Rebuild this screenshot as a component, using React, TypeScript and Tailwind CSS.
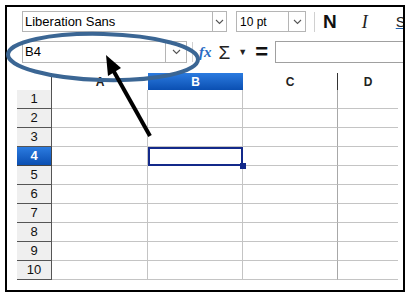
import React from "react";

const rows = [1, 2, 3, 4, 5, 6, 7, 8, 9, 10];

function Chevron() {
  return (
    <svg width="9" height="6" viewBox="0 0 9 6">
      <path d="M1 1 L4.5 4.5 L8 1" fill="none" stroke="#555" strokeWidth="1.1" />
    </svg>
  );
}

export default function App() {
  const font = { fontFamily: '"Liberation Sans", Arial, sans-serif' };
  return (
    <div className="relative w-[411px] h-[294px] bg-white pt-[5px] pl-[5px]" style={font}>
      <div className="w-[400px] h-[287px] border-2 border-black flex flex-col overflow-hidden bg-white">
        {/* toolbar row 1 */}
        <div className="mt-[4px] ml-[15px] h-[21px] flex items-center">
          <div className="shrink-0 w-[191px] h-[21px] border border-[#b5b5b5] bg-white flex items-center pl-[2px] text-[13px] text-black">
            Liberation Sans
          </div>
          <div className="shrink-0 w-[14px] h-[21px] border border-l-0 border-[#b5b5b5] flex items-center justify-center">
            <Chevron />
          </div>
          <div className="shrink-0 ml-[9px] w-[53px] h-[21px] border border-[#b5b5b5] flex items-center pl-[3px] text-[12px] text-black">
            10 pt
          </div>
          <div className="shrink-0 w-[17px] h-[21px] border border-l-0 border-[#b5b5b5] flex items-center justify-center">
            <Chevron />
          </div>
          <div className="shrink-0 ml-[8px] w-px h-[20px] bg-[#d0d0d0]" />
          <div className="shrink-0 ml-[8px] text-[19px] font-bold text-[#111] leading-none">N</div>
          <div className="shrink-0 ml-[25px] text-[18px] italic text-[#222] leading-none" style={{ fontFamily: '"Liberation Serif", serif' }}>I</div>
          <div className="shrink-0 ml-[28px] text-[15px] text-[#222] leading-none underline decoration-[#2060b0]">S</div>
        </div>
        {/* toolbar row 2 */}
        <div className="mt-[9px] ml-[15px] h-[22px] flex items-center">
          <div className="shrink-0 w-[143px] h-[22px] border border-[#b5b5b5] border-r-0 flex items-center pl-[2px] text-[13px] text-black">
            B4
          </div>
          <div className="shrink-0 w-[22px] h-[22px] border border-[#b5b5b5] flex items-center justify-center">
            <Chevron />
          </div>
          <div className="shrink-0 ml-[5px] w-px h-[20px] bg-[#d0d0d0]" />
          <div className="shrink-0 ml-[6px] text-[15px] italic font-bold text-[#2a6bc4] leading-none" style={{ fontFamily: '"Liberation Serif", serif' }}>fx</div>
          <div className="shrink-0 ml-[7px] text-[19px] text-[#222] leading-none">Σ</div>
          <div className="shrink-0 ml-[8px] text-[9px] text-[#222] leading-none">▼</div>
          <div className="shrink-0 ml-[8px] text-[22px] font-bold text-[#111] leading-none">=</div>
          <div className="shrink-0 ml-[7px] w-[140px] h-[22px] border border-[#a0a0a0] bg-white" />
        </div>
        {/* grid */}
        <div className="mt-[10px] ml-[10px] flex flex-col">
          <div className="flex h-[17px]">
            <div className="shrink-0 w-[35px] h-[17px] border-r border-[#444] bg-white" />
            <div className="shrink-0 w-[96px] h-[17px] flex items-center justify-center text-[12px] font-bold text-[#222]">A</div>
            <div className="shrink-0 w-[95px] h-[17px] flex items-center justify-center text-[12px] font-bold text-white bg-gradient-to-b from-[#2b7be0] to-[#0a4fb2]">B</div>
            <div className="shrink-0 w-[95px] h-[17px] flex items-center justify-center text-[12px] font-bold text-[#222] border-r border-[#333]">C</div>
            <div className="shrink-0 w-[60px] h-[17px] flex items-center justify-center text-[12px] font-bold text-[#222]">D</div>
          </div>
          {rows.map((r) => {
            const sel = r === 4;
            return (
              <div key={r} className="flex h-[19px]">
                <div
                  className={
                    sel
                      ? "shrink-0 w-[35px] h-[19px] border-r border-b border-[#444] flex items-center justify-center text-[13px] font-bold text-white bg-gradient-to-b from-[#2b7be0] to-[#0a4fb2]"
                      : "shrink-0 w-[35px] h-[19px] border-r border-b border-[#555] flex items-center justify-center text-[13px] text-[#111] bg-[#efefef]"
                  }
                >
                  {r}
                </div>
                <div className="shrink-0 w-[96px] h-[19px] border-r border-b border-[#c4c4c4]" />
                <div
                  className={
                    sel
                      ? "shrink-0 relative w-[95px] h-[19px] border-2 border-[#13298a]"
                      : "shrink-0 w-[95px] h-[19px] border-r border-b border-[#c4c4c4]"
                  }
                >
                  {sel && <div className="absolute right-[-5px] bottom-[-5px] w-[6px] h-[6px] bg-[#13298a]" />}
                </div>
                <div className="shrink-0 w-[95px] h-[19px] border-r border-b border-[#a8a8a8] border-b-[#c4c4c4]" />
                <div className="shrink-0 w-[60px] h-[19px] border-b border-[#c4c4c4]" />
              </div>
            );
          })}
        </div>
      </div>
      {/* annotation overlay */}
      <svg className="absolute left-0 top-0 pointer-events-none" width="411" height="294" viewBox="0 0 411 294">
        <ellipse cx="103" cy="57" rx="95" ry="23" fill="none" stroke="#3b6694" strokeWidth="4" transform="rotate(1.5 103 57)" />
        <line x1="150" y1="136" x2="113" y2="70" stroke="#000" strokeWidth="4" />
        <polygon points="106,55 121,68 108,76" fill="#000" />
      </svg>
    </div>
  );
}
